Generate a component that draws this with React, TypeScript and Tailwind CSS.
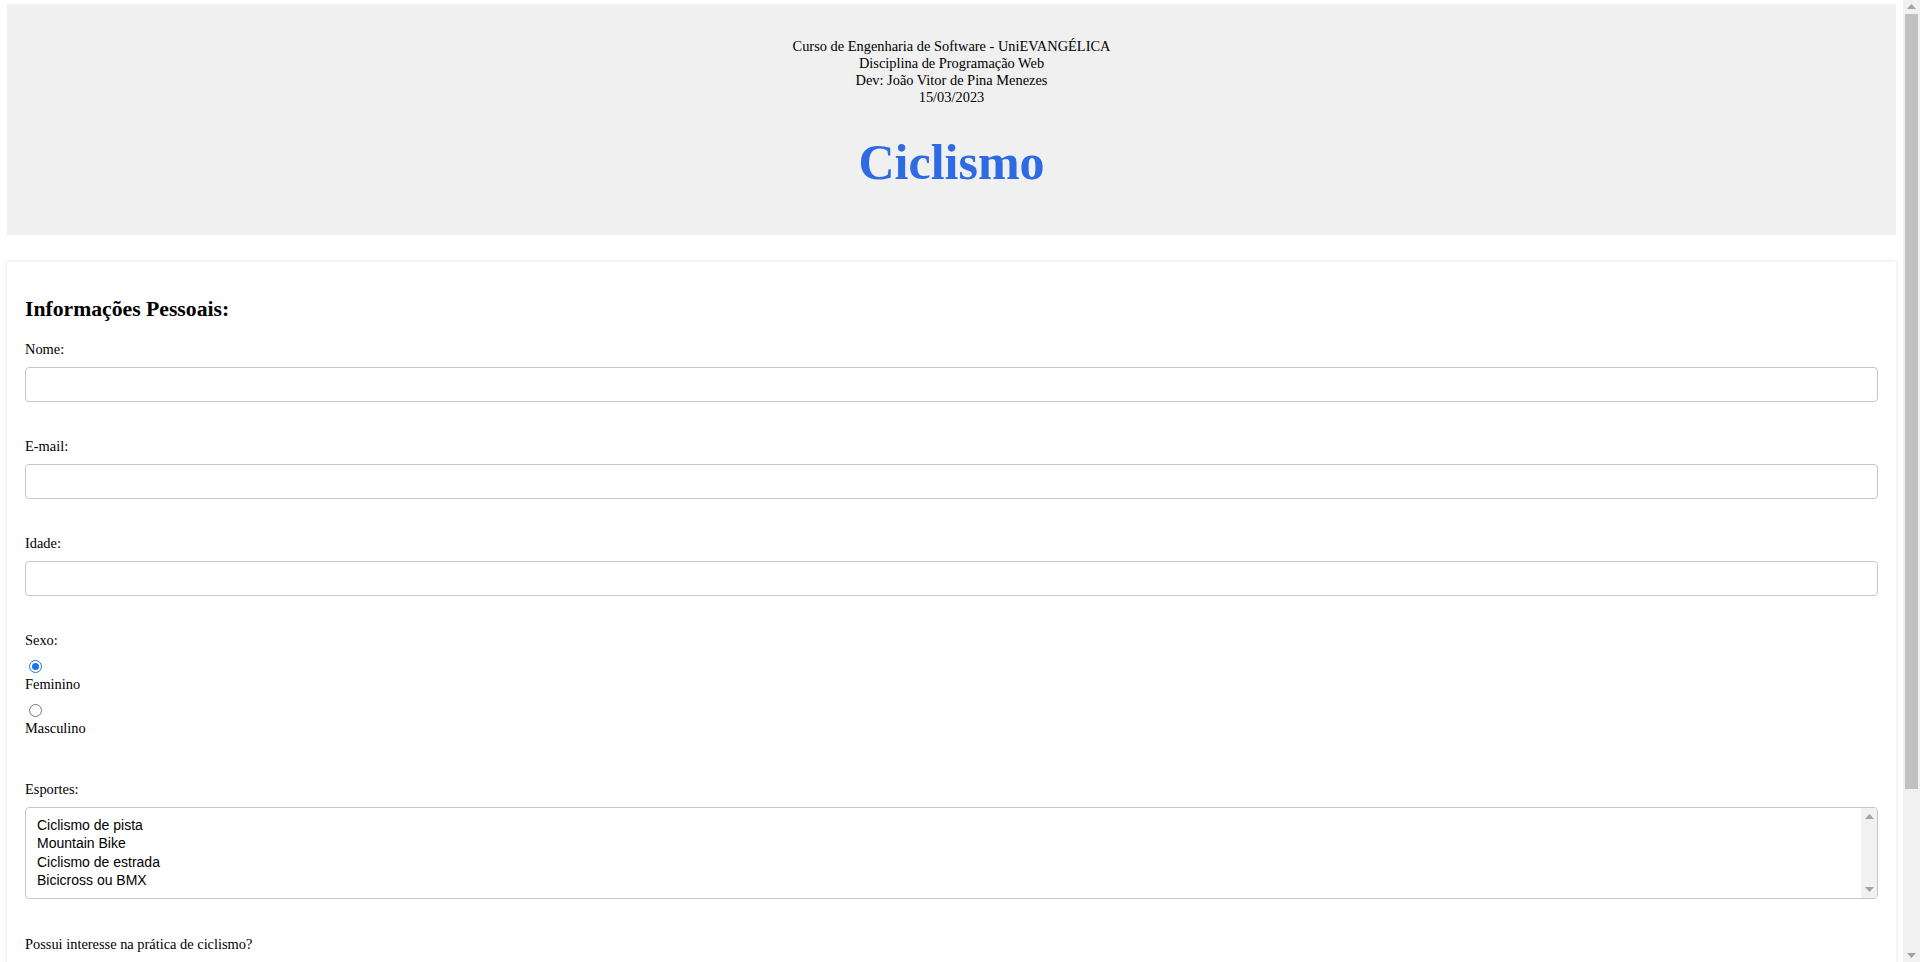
import React from "react";

const esportes = [
  "Ciclismo de pista",
  "Mountain Bike",
  "Ciclismo de estrada",
  "Bicicross ou BMX",
];

function Arrow({ up, className }: { up?: boolean; className?: string }) {
  return (
    <svg width="9" height="5" viewBox="0 0 9 5" className={className}>
      {up ? (
        <path d="M0 5 L4.5 0 L9 5 Z" fill="#a3a3a3" />
      ) : (
        <path d="M0 0 L9 0 L4.5 5 Z" fill="#a3a3a3" />
      )}
    </svg>
  );
}

function Field({ label }: { label: string }) {
  return (
    <div className="mb-[36px]">
      <label className="block leading-[17px]">{label}</label>
      <input
        type="text"
        className="mt-[9px] block h-[35px] w-full rounded-[4px] border border-[#c6c6c6] bg-white outline-none"
      />
    </div>
  );
}

function Radio({ checked }: { checked?: boolean }) {
  return (
    <span
      className={`ml-[4px] flex h-[13px] w-[13px] items-center justify-center rounded-full border ${
        checked ? "border-[#1a73e8]" : "border-[#767676]"
      }`}
    >
      {checked && <span className="h-[7px] w-[7px] rounded-full bg-[#1a73e8]" />}
    </span>
  );
}

export default function App() {
  return (
    <div className="flex h-[962px] w-[1920px] overflow-hidden bg-white font-['Liberation_Serif',serif] text-[14.4px] text-black">
      <div className="w-[1903px] shrink-0 px-[7px] pt-[4px]">
        {/* HEADER */}
        <header className="h-[231px] bg-[#f0f0f0] pt-[34px] text-center">
          <p className="leading-[17px]">Curso de Engenharia de Software - UniEVANGÉLICA</p>
          <p className="leading-[17px]">Disciplina de Programação Web</p>
          <p className="leading-[17px]">Dev: João Vitor de Pina Menezes</p>
          <p className="leading-[17px]">15/03/2023</p>
          <h1 className="mt-[27px] text-[50px] font-bold leading-[58px] text-[#2e6be2]">
            Ciclismo
          </h1>
        </header>

        {/* FORM CARD */}
        <section className="mt-[27px] h-[800px] bg-white px-[18px] pt-[34px] shadow-[0_0_5px_rgba(0,0,0,0.12)]">
          <h2 className="text-[21.7px] font-bold leading-[26px]">Informações Pessoais:</h2>

          <div className="mt-[19px]">
            <Field label="Nome:" />
            <Field label="E-mail:" />
            <Field label="Idade:" />
          </div>

          <div>
            <p className="leading-[17px]">Sexo:</p>
            <div className="mt-[11px]">
              <Radio checked />
            </div>
            <p className="mt-[3px] leading-[17px]">Feminino</p>
            <div className="mt-[11px]">
              <Radio />
            </div>
            <p className="mt-[3px] leading-[17px]">Masculino</p>
          </div>

          <div className="mt-[44px]">
            <p className="leading-[17px]">Esportes:</p>
            <div className="mt-[9px] flex h-[92px] overflow-hidden rounded-[4px] border border-[#c6c6c6] bg-white">
              <div className="flex-1 pl-[11px] pt-[8px] font-['Liberation_Sans',sans-serif] text-[14px] leading-[18.3px]">
                {esportes.map((e) => (
                  <div key={e}>{e}</div>
                ))}
              </div>
              <div className="flex w-[16px] flex-col items-center justify-between bg-[#f1f1f1] py-[6px]">
                <Arrow up />
                <Arrow />
              </div>
            </div>
          </div>

          <p className="mt-[37px] leading-[17px]">Possui interesse na prática de ciclismo?</p>
        </section>
      </div>

      {/* PAGE SCROLLBAR */}
      <div className="relative flex w-[17px] shrink-0 flex-col items-center bg-[#f1f1f1]">
        <Arrow up className="mt-[4px]" />
        <div className="mt-[5px] h-[775px] w-[13px] bg-[#c1c1c1]" />
        <div className="flex-1" />
        <Arrow className="mb-[4px]" />
      </div>
    </div>
  );
}
